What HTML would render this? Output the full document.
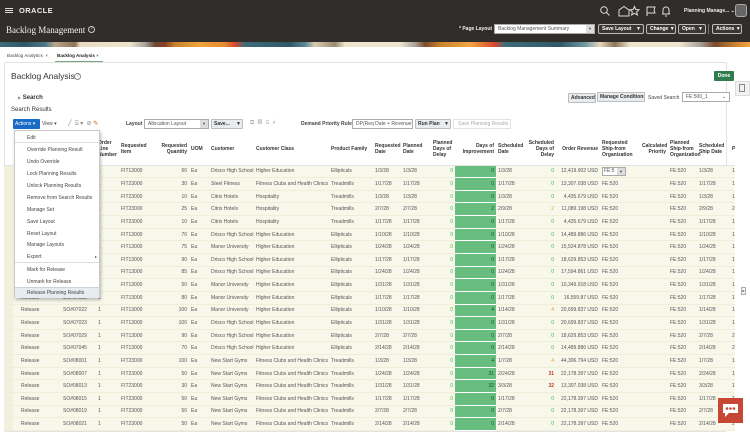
<!DOCTYPE html>
<html><head><meta charset="utf-8"><style>
*{box-sizing:border-box;margin:0;padding:0}
body{width:750px;height:423px;overflow:hidden;background:#fff;font-family:"Liberation Sans",sans-serif;color:#333;position:relative}
.a{position:absolute;white-space:nowrap}
.hdr{position:absolute;left:0;top:0;width:750px;height:42px;background:#312d2a}
.ban{position:absolute;left:0;top:42px;width:750px;height:5px;background:linear-gradient(90deg,#3d6c7a 0,#2f5866 25px,#4b7886 45px,#b9a68a 55px,#8e7458 75px,#e9dcc2 80px,#efe4cc 130px,#a8a49c 145px,#6b4a33 155px,#8b3f22 165px,#c9822e 175px,#f0a43a 200px,#e38a30 225px,#d7482e 235px,#3d6c7a 245px,#2f5866 290px,#5c8793 305px,#d9ccb0 315px,#9b8a72 335px,#efe4cc 345px,#f0e6d0 400px,#a8a49c 415px,#7b4a2c 425px,#c9822e 440px,#f2a640 470px,#d7482e 495px,#3d6c7a 505px,#2f5866 560px,#6f97a2 585px,#e6d8bc 600px,#8e7458 615px,#efe4cc 630px,#efe4cc 680px,#a8a49c 700px,#7b4a2c 715px,#c9822e 735px,#f2a640 750px)}
.btn,.lb,.sel{white-space:nowrap;overflow:hidden}
.btn{position:absolute;height:10px;border:1px solid #bbb;border-radius:2px;font-size:5px;font-weight:bold;color:#fff;line-height:8px;padding:0 3px;background:#3b3633}
.lb{position:absolute;height:10px;border:1px solid #bdbdbd;border-radius:1px;font-size:5px;font-weight:bold;line-height:8px;padding:0 2px;background:#e9ecef;color:#333}
.sel{position:absolute;height:10px;border:1px solid #aaa;background:#fff;font-size:5px;line-height:8px;padding:0 3px;color:#555}
table{position:absolute;left:4px;top:133px;border-collapse:collapse;table-layout:fixed;width:731px;font-size:5px}
th{font-weight:bold;text-align:left;vertical-align:middle;height:32px;line-height:6px;color:#333;padding:0 2px;border-bottom:1px solid #e4e4e4}
td{height:12.65px;padding:0 2px;line-height:6px;white-space:nowrap;overflow:hidden;background:#f7f7ea;border-bottom:1px solid #eeeed9;color:#555}
td.g{background:#f0f0dc}
td.p{padding-left:8px}
td.r,th.r{text-align:right}
td.gr{background:#67be7f;color:#1e4a2a;text-align:right;border-bottom:1px solid #fff}
.gz{color:#4caf50}.or{color:#f39c33}.rd{color:#c0392b;font-weight:bold}
.menu{position:absolute;left:14px;top:130px;width:86px;height:168px;background:#fff;border:1px solid #c8c8c8;box-shadow:1px 2px 3px rgba(0,0,0,.25);font-size:5px;color:#444}
.menu div{position:absolute;left:12px;white-space:nowrap}
</style></head><body>
<div class="hdr"></div>
<div class="a" style="left:5px;top:8px;width:8px;height:1px;background:#ddd;box-shadow:0 2px 0 #ddd,0 4px 0 #ddd"></div>
<div class="a" style="left:19px;top:6px;font-size:7.5px;font-weight:bold;color:#eee;letter-spacing:0.4px">ORACLE</div>
<div class="a" style="left:6px;top:25px;font-family:'Liberation Serif',serif;font-size:9px;color:#f3f3f3">Backlog Management</div>
<div class="a" style="left:88px;top:26px;width:7px;height:7px;border:1px solid #ccc;border-radius:50%;font-size:5px;color:#ccc;text-align:center;line-height:5px">?</div>
<svg class="a" style="left:595px;top:5px" width="150" height="13" fill="none" stroke="#ddd" stroke-width="1">
<circle cx="9" cy="5" r="3.3"/><path d="M11.5 7.5l3 3"/>
<path d="M24 11V5l5-3.5 5 3.5v6z"/>
<path d="M39.5 1.5l1.3 3 3.2.3-2.4 2.1.8 3.1-2.9-1.7-2.9 1.7.8-3.1-2.4-2.1 3.2-.3z"/>
<path d="M52 11V2h8l-1 3 1 3h-8"/>
<path d="M68 9V5a3 3 0 016 0v4zM67 9h8M70 11h2"/>
</svg>
<div class="a" style="left:684px;top:8px;font-size:5px;font-weight:bold;color:#eee">Planning Manage... ⌄</div>
<div class="a" style="left:735px;top:4px;width:12px;height:13px;border-radius:3px;background:#666;border:1px solid #aaa"></div>
<div class="a" style="left:459px;top:26px;font-size:5px;font-weight:bold;color:#eee">* Page Layout</div>
<div class="sel" style="left:494px;top:24px;width:101px">Backlog Management Summary<span style="position:absolute;right:0;top:0;width:8px;height:8px;background:#ddd;font-size:4px;text-align:center">▼</span></div>
<div class="btn" style="left:598px;top:24px;width:46px">Save Layout <span style="float:right;margin-right:-1px">▼</span></div>
<div class="btn" style="left:646px;top:24px;width:30px">Change ▼</div>
<div class="btn" style="left:678px;top:24px;width:28px">Open <span style="float:right;margin-right:-1px">▼</span></div>
<div class="a" style="left:708px;top:24px;width:1px;height:10px;background:#777"></div>
<div class="btn" style="left:712px;top:24px;width:30px">Actions ▼</div>
<div class="ban"></div>
<div class="a" style="left:7px;top:53px;font-size:4.6px;color:#444">Backlog Analytics &nbsp;×</div>
<div class="a" style="left:57px;top:53px;font-size:4.6px;font-weight:bold;color:#222">Backlog Analysis <span style="font-weight:normal">×</span></div>
<div class="a" style="left:55px;top:61px;width:48px;height:1px;background:#7aa37e"></div>
<div class="a" style="left:4px;top:62px;width:723px;height:370px;border:1px solid #e3e3e3;border-radius:2px"></div>
<div class="a" style="left:11px;top:71px;font-size:8.5px;color:#333">Backlog Analysis</div>
<div class="a" style="left:74px;top:73px;width:7px;height:7px;border:1px solid #888;border-radius:50%;font-size:5px;color:#777;text-align:center;line-height:5px">?</div>
<div class="a" style="left:714px;top:71px;width:20px;height:10px;background:#2f7d4f;border-radius:1px;font-size:5px;color:#fff;font-weight:bold;text-align:center;line-height:10px">Done</div>
<div class="a" style="left:735px;top:81px;width:15px;height:15px;background:#f2f2f2;border:1px solid #ddd"></div>
<div class="a" style="left:739px;top:84px;width:6px;height:8px;border:1px solid #888"></div>
<div class="a" style="left:18px;top:95px;font-size:6px;color:#333"><span style="font-size:4px;color:#888">▶</span> <b>Search</b></div>
<div class="a" style="left:11px;top:107px;font-size:6px;color:#333">Search Results</div>
<div class="lb" style="left:568px;top:93px;width:28px">Advanced</div>
<div class="lb" style="left:597px;top:92px;width:48px">Manage Conditions</div>
<div class="a" style="left:648px;top:95px;font-size:5px;color:#444">Saved Search</div>
<div class="sel" style="left:682px;top:92px;width:48px">FE:500_1<span style="float:right">⌄</span></div>
<div class="a" style="left:13px;top:119px;width:27px;height:10px;background:#1a6bc5;color:#fff;font-size:5px;line-height:10px;padding-left:2px;border-radius:1px">Actions ▾</div>
<div class="a" style="left:42px;top:121px;font-size:5px;color:#444">View ▾</div>
<div class="a" style="left:68px;top:120px;font-size:6px;color:#888">╱ &nbsp;⌸ ▾ &nbsp;⊘ <span style="color:#d35400">✎</span></div>
<div class="a" style="left:126px;top:121px;font-size:5px;font-weight:bold;color:#444">Layout</div>
<div class="sel" style="left:144px;top:119px;width:65px">Allocation Layout<span style="position:absolute;right:0;top:0;width:8px;height:8px;background:#ddd;font-size:4px;text-align:center">▼</span></div>
<div class="lb" style="left:211px;top:119px;width:32px">Save... <span style="float:right;margin-right:-1px">▼</span></div>
<div class="a" style="left:250px;top:120px;font-size:6px;color:#aaa">⧉ &nbsp;▤ &nbsp;⊡ &nbsp;↲</div>
<div class="a" style="left:301px;top:121px;font-size:5px;font-weight:bold;color:#444">Demand Priority Rule</div>
<div class="sel" style="left:352px;top:119px;width:61px">DP(Req Date + Revenue) ⌄</div>
<div class="lb" style="left:415px;top:119px;width:36px">Run Plan <span style="float:right;margin-right:-1px">▼</span></div>
<div class="a" style="left:453px;top:119px;width:58px;height:10px;border:1px solid #e2e2e2;font-size:5px;color:#aaa;line-height:8px;padding-left:4px">Save Planning Results</div>

<table>
<colgroup><col style="width:9px"><col style="width:48px"><col style="width:35px"><col style="width:23px"><col style="width:37px"><col style="width:33px"><col style="width:20px"><col style="width:45px"><col style="width:75px"><col style="width:44px"><col style="width:28px"><col style="width:30px"><col style="width:24px"><col style="width:41px"><col style="width:29px"><col style="width:31px"><col style="width:44px"><col style="width:40px"><col style="width:28px"><col style="width:29px"><col style="width:33px"><col style="width:5px"></colgroup>
<tr><th></th><th></th><th></th><th>Order Line Number</th><th>Requested Item</th><th class="r">Requested Quantity</th><th>UOM</th><th>Customer</th><th>Customer Class</th><th>Product Family</th><th>Requested Date</th><th>Planned Date</th><th>Planned Days of Delay</th><th class="r">Days of Improvement</th><th>Scheduled Date</th><th class="r">Scheduled Days of Delay</th><th class="r">Order Revenue</th><th>Requested Ship-from Organization</th><th class="r">Calculated Priority</th><th>Planned Ship-from Organization</th><th>Scheduled Ship Date</th><th>P</th></tr>
<tr><td class="g"></td><td class="p">Release</td><td>SO#07001</td><td>1</td><td>FIT13000</td><td class="r">60</td><td>Ea</td><td>Drisco High School</td><td>Higher Education</td><td>Ellipticals</td><td>1/3/28</td><td>1/3/28</td><td class="r gz">0</td><td class="gr">0</td><td>1/3/28</td><td class="r gz">0</td><td class="r">12,419.902 USD</td><td><span style="display:inline-block;border:1px solid #aaa;background:#fff;width:24px;height:9px;line-height:7px;padding-left:1px">FE:5<span style="float:right;background:#ddd;width:8px;text-align:center;font-size:4px">▼</span></span></td><td></td><td>FE:520</td><td>1/3/28</td><td>1</td></tr>
<tr><td class="g"></td><td class="p">Release</td><td>SO#07003</td><td>1</td><td>FIT23000</td><td class="r">30</td><td>Ea</td><td>Steel Fitness</td><td>Fitness Clubs and Health Clinics</td><td>Treadmills</td><td>1/17/28</td><td>1/17/28</td><td class="r gz">0</td><td class="gr">0</td><td>1/17/28</td><td class="r gz">0</td><td class="r">13,307.038 USD</td><td>FE:520</td><td></td><td>FE:520</td><td>1/17/28</td><td>1</td></tr>
<tr><td class="g"></td><td class="p">Release</td><td>SO#07004</td><td>1</td><td>FIT23000</td><td class="r">10</td><td>Ea</td><td>Citrix Hotels</td><td>Hospitality</td><td>Treadmills</td><td>1/3/28</td><td>1/3/28</td><td class="r gz">0</td><td class="gr">0</td><td>1/3/28</td><td class="r gz">0</td><td class="r">4,435.679 USD</td><td>FE:520</td><td></td><td>FE:520</td><td>1/3/28</td><td>1</td></tr>
<tr><td class="g"></td><td class="p">Release</td><td>SO#07005</td><td>1</td><td>FIT23000</td><td class="r">25</td><td>Ea</td><td>Citrix Hotels</td><td>Hospitality</td><td>Treadmills</td><td>2/7/28</td><td>2/7/28</td><td class="r gz">0</td><td class="gr">2</td><td>2/9/28</td><td class="r or">2</td><td class="r">11,089.198 USD</td><td>FE:520</td><td></td><td>FE:520</td><td>2/9/28</td><td>2</td></tr>
<tr><td class="g"></td><td class="p">Release</td><td>SO#07006</td><td>1</td><td>FIT23000</td><td class="r">10</td><td>Ea</td><td>Citrix Hotels</td><td>Hospitality</td><td>Treadmills</td><td>1/17/28</td><td>1/17/28</td><td class="r gz">0</td><td class="gr">0</td><td>1/17/28</td><td class="r gz">0</td><td class="r">4,435.679 USD</td><td>FE:520</td><td></td><td>FE:520</td><td>1/17/28</td><td>1</td></tr>
<tr><td class="g"></td><td class="p">Release</td><td>SO#07008</td><td>1</td><td>FIT13000</td><td class="r">70</td><td>Ea</td><td>Drisco High School</td><td>Higher Education</td><td>Ellipticals</td><td>1/10/28</td><td>1/10/28</td><td class="r gz">0</td><td class="gr">0</td><td>1/10/28</td><td class="r gz">0</td><td class="r">14,489.886 USD</td><td>FE:520</td><td></td><td>FE:520</td><td>1/10/28</td><td>1</td></tr>
<tr><td class="g"></td><td class="p">Release</td><td>SO#07010</td><td>1</td><td>FIT13000</td><td class="r">75</td><td>Ea</td><td>Manor University</td><td>Higher Education</td><td>Ellipticals</td><td>1/24/28</td><td>1/24/28</td><td class="r gz">0</td><td class="gr">0</td><td>1/24/28</td><td class="r gz">0</td><td class="r">15,524.878 USD</td><td>FE:520</td><td></td><td>FE:520</td><td>1/24/28</td><td>1</td></tr>
<tr><td class="g"></td><td class="p">Release</td><td>SO#07012</td><td>1</td><td>FIT13000</td><td class="r">90</td><td>Ea</td><td>Drisco High School</td><td>Higher Education</td><td>Ellipticals</td><td>1/17/28</td><td>1/17/28</td><td class="r gz">0</td><td class="gr">0</td><td>1/17/28</td><td class="r gz">0</td><td class="r">18,629.853 USD</td><td>FE:520</td><td></td><td>FE:520</td><td>1/17/28</td><td>1</td></tr>
<tr><td class="g"></td><td class="p">Release</td><td>SO#07014</td><td>1</td><td>FIT13000</td><td class="r">85</td><td>Ea</td><td>Drisco High School</td><td>Higher Education</td><td>Ellipticals</td><td>1/24/28</td><td>1/24/28</td><td class="r gz">0</td><td class="gr">0</td><td>1/24/28</td><td class="r gz">0</td><td class="r">17,594.861 USD</td><td>FE:520</td><td></td><td>FE:520</td><td>1/24/28</td><td>1</td></tr>
<tr><td class="g"></td><td class="p">Release</td><td>SO#07016</td><td>1</td><td>FIT13000</td><td class="r">50</td><td>Ea</td><td>Manor University</td><td>Higher Education</td><td>Ellipticals</td><td>1/31/28</td><td>1/31/28</td><td class="r gz">0</td><td class="gr">0</td><td>1/31/28</td><td class="r gz">0</td><td class="r">10,349.918 USD</td><td>FE:520</td><td></td><td>FE:520</td><td>1/31/28</td><td>1</td></tr>
<tr><td class="g"></td><td class="p">Release</td><td>SO#07019</td><td>1</td><td>FIT13000</td><td class="r">80</td><td>Ea</td><td>Manor University</td><td>Higher Education</td><td>Ellipticals</td><td>1/17/28</td><td>1/17/28</td><td class="r gz">0</td><td class="gr">0</td><td>1/17/28</td><td class="r gz">0</td><td class="r">16,559.87 USD</td><td>FE:520</td><td></td><td>FE:520</td><td>1/17/28</td><td>1</td></tr>
<tr><td class="g"></td><td class="p">Release</td><td>SO#07022</td><td>1</td><td>FIT13000</td><td class="r">100</td><td>Ea</td><td>Manor University</td><td>Higher Education</td><td>Ellipticals</td><td>1/10/28</td><td>1/10/28</td><td class="r gz">0</td><td class="gr">4</td><td>1/14/28</td><td class="r or">4</td><td class="r">20,699.837 USD</td><td>FE:520</td><td></td><td>FE:520</td><td>1/14/28</td><td>1</td></tr>
<tr><td class="g"></td><td class="p">Release</td><td>SO#07023</td><td>1</td><td>FIT13000</td><td class="r">100</td><td>Ea</td><td>Drisco High School</td><td>Higher Education</td><td>Ellipticals</td><td>1/31/28</td><td>1/31/28</td><td class="r gz">0</td><td class="gr">0</td><td>1/31/28</td><td class="r gz">0</td><td class="r">20,699.837 USD</td><td>FE:520</td><td></td><td>FE:520</td><td>1/31/28</td><td>1</td></tr>
<tr><td class="g"></td><td class="p">Release</td><td>SO#07029</td><td>1</td><td>FIT13000</td><td class="r">90</td><td>Ea</td><td>Drisco High School</td><td>Higher Education</td><td>Ellipticals</td><td>2/7/28</td><td>2/7/28</td><td class="r gz">0</td><td class="gr">0</td><td>2/7/28</td><td class="r gz">0</td><td class="r">18,629.853 USD</td><td>FE:520</td><td></td><td>FE:520</td><td>2/7/28</td><td>2</td></tr>
<tr><td class="g"></td><td class="p">Release</td><td>SO#07045</td><td>1</td><td>FIT13000</td><td class="r">70</td><td>Ea</td><td>Drisco High School</td><td>Higher Education</td><td>Ellipticals</td><td>2/14/28</td><td>2/14/28</td><td class="r gz">0</td><td class="gr">0</td><td>2/14/28</td><td class="r gz">0</td><td class="r">14,489.886 USD</td><td>FE:520</td><td></td><td>FE:520</td><td>2/14/28</td><td>2</td></tr>
<tr><td class="g"></td><td class="p">Release</td><td>SO#08001</td><td>1</td><td>FIT23000</td><td class="r">100</td><td>Ea</td><td>New Start Gyms</td><td>Fitness Clubs and Health Clinics</td><td>Treadmills</td><td>1/3/28</td><td>1/3/28</td><td class="r gz">0</td><td class="gr">4</td><td>1/7/28</td><td class="r or">4</td><td class="r">44,306.794 USD</td><td>FE:520</td><td></td><td>FE:520</td><td>1/7/28</td><td>1</td></tr>
<tr><td class="g"></td><td class="p">Release</td><td>SO#08007</td><td>1</td><td>FIT23000</td><td class="r">50</td><td>Ea</td><td>New Start Gyms</td><td>Fitness Clubs and Health Clinics</td><td>Treadmills</td><td>1/24/28</td><td>1/24/28</td><td class="r gz">0</td><td class="gr">31</td><td>2/24/28</td><td class="r rd">31</td><td class="r">22,178.397 USD</td><td>FE:520</td><td></td><td>FE:520</td><td>2/24/28</td><td>1</td></tr>
<tr><td class="g"></td><td class="p">Release</td><td>SO#08013</td><td>1</td><td>FIT23000</td><td class="r">30</td><td>Ea</td><td>New Start Gyms</td><td>Fitness Clubs and Health Clinics</td><td>Treadmills</td><td>1/31/28</td><td>1/31/28</td><td class="r gz">0</td><td class="gr">32</td><td>3/3/28</td><td class="r rd">32</td><td class="r">13,307.038 USD</td><td>FE:520</td><td></td><td>FE:520</td><td>3/3/28</td><td>1</td></tr>
<tr><td class="g"></td><td class="p">Release</td><td>SO#08015</td><td>1</td><td>FIT23000</td><td class="r">50</td><td>Ea</td><td>New Start Gyms</td><td>Fitness Clubs and Health Clinics</td><td>Treadmills</td><td>1/17/28</td><td>1/17/28</td><td class="r gz">0</td><td class="gr">0</td><td>1/17/28</td><td class="r gz">0</td><td class="r">22,178.397 USD</td><td>FE:520</td><td></td><td>FE:520</td><td>1/17/28</td><td>1</td></tr>
<tr><td class="g"></td><td class="p">Release</td><td>SO#08019</td><td>1</td><td>FIT23000</td><td class="r">50</td><td>Ea</td><td>New Start Gyms</td><td>Fitness Clubs and Health Clinics</td><td>Treadmills</td><td>2/7/28</td><td>2/7/28</td><td class="r gz">0</td><td class="gr">0</td><td>2/7/28</td><td class="r gz">0</td><td class="r">22,178.397 USD</td><td>FE:520</td><td></td><td>FE:520</td><td>2/7/28</td><td>2</td></tr>
<tr><td class="g"></td><td class="p">Release</td><td>SO#08021</td><td>1</td><td>FIT23000</td><td class="r">50</td><td>Ea</td><td>New Start Gyms</td><td>Fitness Clubs and Health Clinics</td><td>Treadmills</td><td>2/14/28</td><td>2/14/28</td><td class="r gz">0</td><td class="gr">0</td><td>2/14/28</td><td class="r gz">0</td><td class="r">22,178.397 USD</td><td>FE:520</td><td></td><td>FE:520</td><td>2/14/28</td><td>2</td></tr>
</table>
<div class="a" style="left:741px;top:287px;width:5px;height:8px;border:1px solid #aaa;background:#f4f4f4;font-size:4px;line-height:6px;text-align:center">▸</div>

<div class="menu">
<div style="top:4px">Edit</div>
<div style="top:11px;left:0;width:84px;height:1px;background:#ddd"></div>
<div style="top:16px">Override Planning Result</div>
<div style="top:28px">Undo Override</div>
<div style="top:40px">Lock Planning Results</div>
<div style="top:52px">Unlock Planning Results</div>
<div style="top:64px">Remove from Search Results</div>
<div style="top:76px">Manage Set</div>
<div style="top:88px">Save Layout</div>
<div style="top:100px">Reset Layout</div>
<div style="top:111px">Manage Layouts</div>
<div style="top:123px">Export</div><div style="top:123px;left:80px;font-size:4px">▸</div>
<div style="top:131px;left:0;width:84px;height:1px;background:#ddd"></div>
<div style="top:136px">Mark for Release</div>
<div style="top:148px">Unmark for Release</div>
<div style="top:156px;left:0;width:84px;height:11px;background:#e6ecf1;border-top:1px solid #c9d3dc"></div>
<div style="top:159px">Release Planning Results</div>
</div>

<div class="a" style="left:718px;top:398px;width:25px;height:25px;background:#c74634"></div>
<svg class="a" style="left:721px;top:402px" width="19" height="17"><path d="M2 2h15v9H8l-4 4v-4H2z" fill="#fff"/><circle cx="6" cy="6.5" r="1.3" fill="#c74634"/><circle cx="9.5" cy="6.5" r="1.3" fill="#c74634"/><circle cx="13" cy="6.5" r="1.3" fill="#c74634"/></svg>
</body></html>
